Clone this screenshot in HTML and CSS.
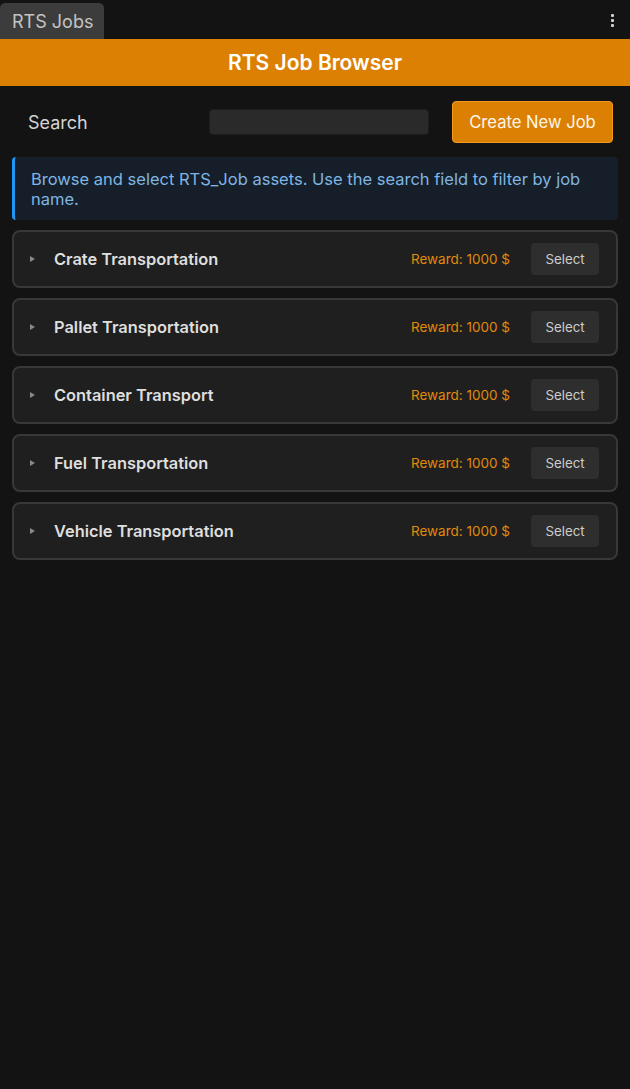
FILE: index.html
```html
<!DOCTYPE html>
<html lang="en">
<head>
<meta charset="UTF-8">
<meta name="viewport" content="width=device-width, initial-scale=1.0">
<title>RTS Jobs</title>
<link rel="stylesheet" href="styles.css">
</head>
<body>

<div class="tabbar">
<div class="tab">RTS Jobs</div>
<div class="menu"><span></span><span></span><span></span></div>
</div>

<div class="header">RTS Job Browser</div>

<div class="content">
<div class="search-row">
<label for="search">Search</label>
<input type="text" id="search">
<button class="button button-create">Create New Job</button>
</div>

<div class="info">Browse and select RTS_Job assets. Use the search field to filter by job name.</div>

<div class="job">
<span class="arrow"></span>
<span class="job-name">Crate Transportation</span>
<span class="reward">Reward: 1000 $</span>
<button class="button button-select">Select</button>
</div>

<div class="job">
<span class="arrow"></span>
<span class="job-name">Pallet Transportation</span>
<span class="reward">Reward: 1000 $</span>
<button class="button button-select">Select</button>
</div>

<div class="job">
<span class="arrow"></span>
<span class="job-name">Container Transport</span>
<span class="reward">Reward: 1000 $</span>
<button class="button button-select">Select</button>
</div>

<div class="job">
<span class="arrow"></span>
<span class="job-name">Fuel Transportation</span>
<span class="reward">Reward: 1000 $</span>
<button class="button button-select">Select</button>
</div>

<div class="job">
<span class="arrow"></span>
<span class="job-name">Vehicle Transportation</span>
<span class="reward">Reward: 1000 $</span>
<button class="button button-select">Select</button>
</div>
</div>

</body>
</html>
```

FILE: styles.css
```css
body {
font-family: "Inter", sans-serif;
background-color: #131313;
color: #d8d8d8;
margin: 0;
}

.tabbar {
display: flex;
align-items: flex-end;
justify-content: space-between;
height: 39px;
}

.tab {
background-color: #3c3c3c;
color: #c4c4c4;
font-size: 18px;
height: 36px;
line-height: 37px;
padding: 0 11px 0 12px;
white-space: nowrap;
border-radius: 5px 5px 0 0;
}

.menu {
display: flex;
flex-direction: column;
gap: 2px;
align-self: flex-start;
margin: 14px 16px 0 0;
}

.menu span {
width: 3px;
height: 3px;
background-color: #d0d0d0;
border-radius: 1px;
}

.header {
background-color: #dc8003;
color: #ffffff;
font-weight: 600;
font-size: 21px;
text-align: center;
height: 47px;
line-height: 48px;
}

.content {
padding: 0 12px;
}

.search-row {
display: flex;
align-items: center;
height: 71px;
}

.search-row label {
font-size: 18px;
color: #d4d4d4;
margin-left: 16px;
margin-top: 2px;
width: 181px;
}

.search-row input {
width: 220px;
height: 26px;
box-sizing: border-box;
background-color: #2a2a2a;
border: 1px solid #1e1e1e;
border-radius: 4px;
}

.button {
font-family: "Inter", sans-serif;
cursor: pointer;
}

.button-create {
margin-left: 23px;
width: 161px;
height: 42px;
background-color: #dc8003;
border: 1px solid #f09a20;
border-radius: 4px;
color: #fff6ea;
font-size: 16.6px;
padding: 0;
}

.info {
background-color: #161f29;
border-left: 3px solid #2196f3;
border-radius: 4px;
color: #7fb5e3;
font-size: 16.5px;
line-height: 20px;
padding: 12px 16px 11px 16px;
}

.job {
display: flex;
align-items: center;
height: 58px;
box-sizing: border-box;
background-color: #1f1f1f;
border: 2px solid #383838;
border-radius: 8px;
margin-top: 10px;
padding: 0 17px 0 16px;
}

.arrow {
width: 0;
height: 0;
border-top: 3px solid transparent;
border-bottom: 3px solid transparent;
border-left: 5px solid #8a8a8a;
margin-right: 19px;
}

.job-name {
flex: 1;
font-size: 16.4px;
font-weight: 600;
color: #dedede;
}

.reward {
font-size: 13.5px;
color: #e08a0c;
margin-right: 21px;
}

.button-select {
width: 68px;
height: 32px;
background-color: #2e2e2e;
border: none;
border-radius: 4px;
color: #cccccc;
font-size: 13.3px;
padding: 0;
}

.button:hover {
opacity: 0.9;
}
```
